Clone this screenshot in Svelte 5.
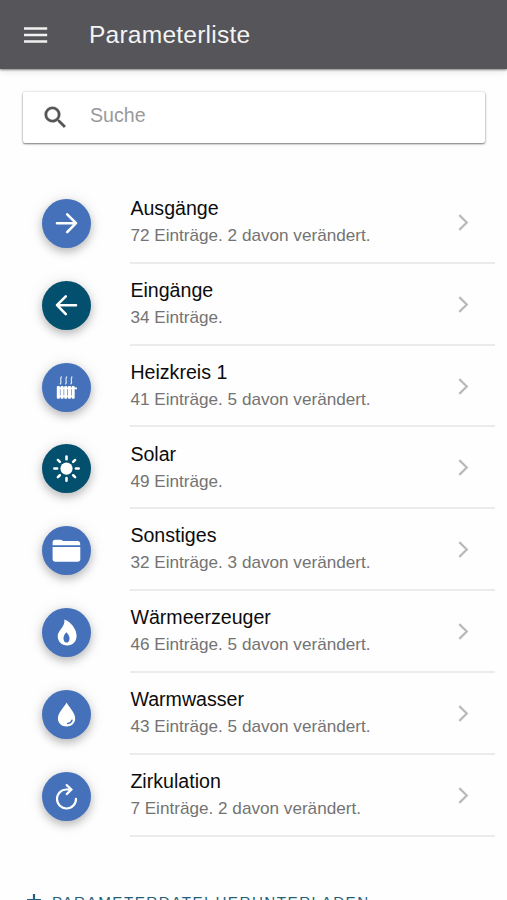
<script>
	let search = ''

	const groups = [
		{ name: 'Ausgänge', info: '72 Einträge. 2 davon verändert.', icon: 'right' },
		{ name: 'Eingänge', info: '34 Einträge.', icon: 'left', dark: true },
		{ name: 'Heizkreis 1', info: '41 Einträge. 5 davon verändert.', icon: 'radiator' },
		{ name: 'Solar', info: '49 Einträge.', icon: 'sun', dark: true },
		{ name: 'Sonstiges', info: '32 Einträge. 3 davon verändert.', icon: 'folder' },
		{ name: 'Wärmeerzeuger', info: '46 Einträge. 5 davon verändert.', icon: 'flame' },
		{ name: 'Warmwasser', info: '43 Einträge. 5 davon verändert.', icon: 'drop' },
		{ name: 'Zirkulation', info: '7 Einträge. 2 davon verändert.', icon: 'cycle' },
	]

	const rays = [0, 45, 90, 135, 180, 225, 270, 315]
	const ribs = [14.8, 18.5, 22.2, 25.9, 29.6]
</script>

<header>
	<svg class="menu" viewBox="0 0 24 18" aria-hidden="true">
		<path d="M0 2.4h23.2M0 9h23.2M0 15.6h23.2" />
	</svg>
	<h1>Parameterliste</h1>
</header>

<main>
	<label class="search">
		<svg viewBox="0 0 24 24" aria-hidden="true">
			<path d="M15.5 14h-.79l-.28-.27A6.47 6.47 0 0 0 16 9.5 6.5 6.5 0 1 0 9.5 16c1.61 0 3.09-.59 4.23-1.57l.27.28v.79l5 4.99L20.49 19l-4.99-5zm-6 0a4.5 4.5 0 1 1 0-9 4.5 4.5 0 0 1 0 9z" />
		</svg>
		<input type="text" placeholder="Suche" bind:value={search} />
	</label>

	<ul>
		{#each groups as group}
			<li>
				<span class="badge" class:dark={group.dark}>
					<svg viewBox="0 0 49 49" aria-hidden="true">
						{#if group.icon === 'right'}
							<path class="line" d="M15 24.2h18.8M25.2 15.3l8.8 8.9-8.8 8.9" />
						{:else if group.icon === 'left'}
							<path class="line" d="M34 24.2H15.2M23.8 15.3L15 24.2l8.8 8.9" />
						{:else if group.icon === 'radiator'}
							<path class="steam" d="M18 21.3c3-3.4-1.4-4.2 1.6-7.8M23.3 21.3c3-3.4-1.4-4.2 1.6-7.8M28.6 21.3c3-3.4-1.4-4.2 1.6-7.8" />
							{#each ribs as x}
								<rect {x} y="23" width="3.1" height="12.8" rx="1" />
							{/each}
							<path d="M15 24.6h20v1.6H15zM15 32.4h17v1.5H15z" />
						{:else if group.icon === 'sun'}
							<circle cx="24.5" cy="24.6" r="6.1" />
							{#each rays as angle}
								<path class="ray" d="M24.5 15.2v-2.8" transform="rotate({angle} 24.5 24.6)" />
							{/each}
						{:else if group.icon === 'folder'}
							<path d="M10.6 19.2v-2.7c0-1.7 1-2.7 2.7-2.7h5.2c1.4 0 1.8 1.2 3 1.2h14c1.7 0 2.7 1 2.7 2.7v1.5z" />
							<path d="M10.6 21h27.7v12c0 1.8-.9 2.8-2.7 2.8H13.4c-1.8 0-2.8-1-2.8-2.8z" />
						{:else if group.icon === 'flame'}
							<path fill-rule="evenodd" d="M22.4 11.4c6.6 2.2 12.2 9.8 12.2 16.4 0 5.9-4 9.7-9.4 9.7-5.6 0-9.5-3.8-9.5-9.4 0-5.8 7.6-9.2 6.7-16.7zM24.4 24.2c-2 2.2-2.9 4.1-2.9 6 0 2.6 1.2 4.4 3 4.4 1.9 0 3-1.7 3-4.2 0-2.2-1.2-4.3-3.1-6.2z" />
						{:else if group.icon === 'drop'}
							<path d="M24.6 12.6c2.7 5.2 8.6 10.1 8.6 16 0 4.7-3.7 8-8.6 8s-8.7-3.3-8.7-8c0-5.9 6-10.8 8.7-16z" />
							<path class="shine" d="M30 30.2c-.5 2.1-1.9 3.2-4.2 3.4" />
						{:else}
							<path class="cycle" d="M34 26.8a9.5 9.5 0 1 1-9.5-9.3h4.2M24.7 13.1l4.7 4.4-4.7 4.6" />
						{/if}
					</svg>
				</span>
				<div class="entry">
					<div class="text">
						<h2>{group.name}</h2>
						<p>{group.info}</p>
					</div>
					<svg class="chevron" viewBox="0 0 11 17" aria-hidden="true">
						<path d="M1.3 1.1l7.5 7.4-7.5 7.4" />
					</svg>
				</div>
			</li>
		{/each}
	</ul>

	<button class="download">
		<svg viewBox="0 0 16 18" aria-hidden="true">
			<path d="M8 1v14M1 7.2h14M3 10l5 5 5-5" />
		</svg>
		Parameterdatei herunterladen
	</button>
</main>

<style>
	:global(body) {
		height: 900px;
		overflow: hidden;
		background: #fefefe;
		font-family: "Liberation Sans", Arial, sans-serif;
	}

	:global(#app) {
		height: 900px;
		overflow: hidden;
	}

	header {
		display: flex;
		align-items: center;
		box-sizing: border-box;
		height: 69px;
		padding-left: 24px;
		background: #565559;
		box-shadow: 0 1px 2px rgba(0, 0, 0, .45), 0 2px 8px rgba(0, 0, 0, .1);
	}

	.menu {
		width: 24px;
		height: 18px;
		margin-right: 41px;
		fill: none;
		stroke: #f1f1f1;
		stroke-width: 2.5;
	}

	h1 {
		margin: 0;
		color: #f4f4f4;
		font-size: 24.6px;
		font-weight: 400;
		line-height: 30px;
		letter-spacing: .2px;
	}

	.search {
		display: flex;
		align-items: center;
		box-sizing: border-box;
		height: 51px;
		margin: 23px 22px 0 23px;
		padding-left: 18px;
		background: #fff;
		border-radius: 2px;
		box-shadow: 0 1px 2px rgba(0, 0, 0, .5), 0 0 3px rgba(0, 0, 0, .14);
	}

	.search svg {
		width: 29px;
		height: 29px;
		margin-right: 20px;
		fill: #555;
		stroke: #555;
		stroke-width: .3;
	}

	input {
		flex: 1;
		min-width: 0;
		padding: 0 0 5px;
		border: 0;
		outline: 0;
		background: none;
		color: #222;
		font: 19.6px "Liberation Sans", Arial, sans-serif;
	}

	input::placeholder {
		color: #999;
	}

	ul {
		margin: 39px 0 0;
		padding: 0;
		list-style: none;
	}

	li {
		display: flex;
		align-items: center;
		height: 81.83px;
		padding: 0 12px 0 42.4px;
	}

	.badge {
		width: 49px;
		height: 49px;
		margin: 1px 39px 0 0;
		border-radius: 50%;
		background: #4471ba;
		box-shadow: 0 4px 8px rgba(0, 0, 0, .22), 0 1px 16px rgba(0, 0, 0, .1);
	}

	.badge.dark {
		background: #034f6e;
	}

	.badge svg {
		display: block;
		fill: #fff;
	}

	.badge .line {
		fill: none;
		stroke: #fff;
		stroke-width: 2.6;
		stroke-linecap: round;
		stroke-linejoin: round;
	}

	.badge .steam {
		fill: none;
		stroke: #dce6f5;
		stroke-width: 1.2;
	}

	.badge .ray {
		stroke: #fff;
		stroke-width: 2.5;
		stroke-linecap: round;
	}

	.badge .shine {
		fill: none;
		stroke: #4471ba;
		stroke-width: 1.5;
		stroke-linecap: round;
	}

	.badge .cycle {
		fill: none;
		stroke: #fff;
		stroke-width: 2.2;
		stroke-linecap: round;
	}

	.entry {
		display: flex;
		flex: 1;
		align-items: center;
		justify-content: space-between;
		box-sizing: border-box;
		height: 100%;
		padding-right: 26px;
		border-bottom: 2px solid #ebebeb;
	}

	.text {
		margin-bottom: 1.6px;
	}

	h2 {
		margin: 0 0 2px;
		color: #0c0c0c;
		font-size: 19.6px;
		font-weight: 400;
		line-height: 26px;
	}

	p {
		margin: 0;
		color: #737373;
		font-size: 17.15px;
		line-height: 24px;
	}

	.chevron {
		width: 11px;
		height: 17px;
		margin-top: 1px;
		fill: none;
		stroke: #b9b9b9;
		stroke-width: 2.2;
	}

	.download {
		display: flex;
		align-items: center;
		margin: 53px 0 0 26px;
		padding: 0;
		border: 0;
		background: none;
		color: #245f7c;
		font: 15.2px/24px "Liberation Sans", Arial, sans-serif;
		letter-spacing: 1.48px;
		text-transform: uppercase;
		white-space: nowrap;
	}

	.download svg {
		width: 16px;
		height: 18px;
		margin-right: 10px;
		fill: none;
		stroke: #245f7c;
		stroke-width: 2.2;
	}
</style>
